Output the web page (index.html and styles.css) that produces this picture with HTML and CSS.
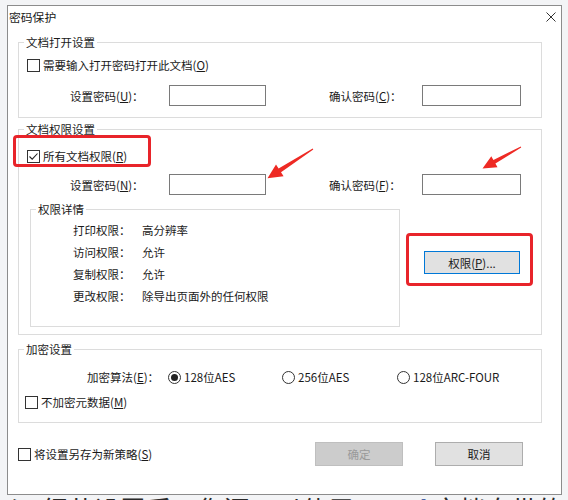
FILE: index.html
```html
<!DOCTYPE html>
<html lang="zh-CN">
<head>
<meta charset="utf-8">
<title>密码保护</title>
<link rel="stylesheet" href="styles.css">
</head>
<body>
<div class="dialog">
  <div class="titlebar">
    <span class="title">密码保护</span>
    <svg class="close" width="10" height="10" viewBox="0 0 10 10"><path d="M0.5 0.5 L9.5 9.5 M9.5 0.5 L0.5 9.5" stroke="#333" stroke-width="1" fill="none"/></svg>
  </div>
  <div class="content">
    <div class="group g1">
      <div class="legend">文档打开设置</div>
      <label class="check-row cr1"><span class="cb"></span><span>需要输入打开密码打开此文档(<u>O</u>)</span></label>
      <div class="pw-row">
        <span class="pw-label l1">设置密码(<u>U</u>)：</span>
        <span class="input i1"></span>
        <span class="pw-label l2">确认密码(<u>C</u>)：</span>
        <span class="input i2"></span>
      </div>
    </div>

    <div class="group g2">
      <div class="legend">文档权限设置</div>
      <label class="check-row cr1"><span class="cb checked"><svg width="11" height="11" viewBox="0 0 11 11"><path d="M1.5 5.5 L4.2 8.2 L9.5 2.5" stroke="#222" stroke-width="1.1" fill="none"/></svg></span><span>所有文档权限(<u>R</u>)</span></label>
      <div class="pw-row r2">
        <span class="pw-label l1">设置密码(<u>N</u>)：</span>
        <span class="input i1"></span>
        <span class="pw-label l2">确认密码(<u>F</u>)：</span>
        <span class="input i2"></span>
      </div>
      <div class="perm-area">
        <div class="group sub">
          <div class="legend">权限详情</div>
          <div class="perm-list">
            <div class="perm"><span class="pk">打印权限：</span><span>高分辨率</span></div>
            <div class="perm"><span class="pk">访问权限：</span><span>允许</span></div>
            <div class="perm"><span class="pk">复制权限：</span><span>允许</span></div>
            <div class="perm"><span class="pk">更改权限：</span><span>除导出页面外的任何权限</span></div>
          </div>
        </div>
        <div class="btn btn-perm">权限(<u>P</u>)...</div>
      </div>
    </div>

    <div class="group g3">
      <div class="legend">加密设置</div>
      <div class="radio-row">
        <span class="alg-label">加密算法(<u>E</u>)：</span>
        <span class="opt o1"><span class="rb on"></span>128位AES</span>
        <span class="opt o2"><span class="rb"></span>256位AES</span>
        <span class="opt o3"><span class="rb"></span>128位ARC-FOUR</span>
      </div>
      <label class="check-row cr3"><span class="cb"></span><span>不加密元数据(<u>M</u>)</span></label>
    </div>

    <div class="footer">
      <label class="check-row cr4"><span class="cb"></span><span>将设置另存为新策略(<u>S</u>)</span></label>
      <div class="btn btn-ok">确定</div>
      <div class="btn btn-cancel">取消</div>
    </div>
  </div>
</div>
<div class="backdoc"><span>≥ 细节设置后，您还可以使用 <b class="blue">Word</b> 文档自带的保护功能</span></div>

<div class="mark m1"></div>
<div class="mark m2"></div>
<svg class="arrows" width="568" height="500" viewBox="0 0 568 500">
  <polygon fill="#ee2a24" points="313.3,149.4 281,172.3 283.6,176.2 267.5,178.3 276,164.6 278.6,168.6 312.7,148.6"/>
  <polygon fill="#ee2a24" points="521.2,147.4 495.4,163.5 497.5,167.2 482.5,168.4 491.3,156.2 493.4,159.9 520.8,146.6"/>
</svg>
</body>
</html>
```
FILE: styles.css
```css
* { box-sizing: border-box; }
html, body { margin: 0; padding: 0; }
body {
  width: 568px;
  height: 500px;
  overflow: hidden;
  background: #f3f4f6;
  font-family: "Noto Sans CJK SC", "Noto Sans", sans-serif;
  font-size: 11.5px;
  color: #1a1a1a;
  position: relative;
}
u { text-decoration: underline; text-underline-offset: 1px; }

.dialog {
  margin: 5px 0 0 7px;
  width: 555px;
  height: 490px;
  border: 1px solid #8c8c8c;
  background: #fff;
}
.titlebar {
  height: 22px;
  display: flex;
  align-items: center;
  padding: 0 5px 0 1px;
}
.title { flex: 1; line-height: 16px; font-size: 11.8px; }
.close { display: block; }

.content { padding: 0 19px 0 10px; }

.group {
  border: 1px solid #dcdcdc;
}
.legend {
  width: fit-content;
  margin: -9px 0 0 5px;
  padding: 0 2px;
  line-height: 16px;
  height: 16px;
  background: #fff;
}
.g1 { margin-top: 14px; padding-bottom: 11px; }
.g2 { margin-top: 11px; padding-bottom: 7px; }
.g3 { margin-top: 14px; padding-bottom: 12px; }

.check-row {
  display: flex;
  align-items: center;
  height: 16px;
  line-height: 16px;
}
.cr1 { margin-top: 7px; padding-left: 8px; }
.g2 .cr1 { margin-top: 11px; }
.cr3 { margin-top: 9px; padding-left: 6px; }
.cb {
  width: 13px;
  height: 13px;
  border: 1px solid #333;
  background: #fff;
  margin-right: 3px;
  display: flex;
  align-items: center;
  justify-content: center;
  flex: none;
}
.cb svg { display: block; }

.pw-row {
  display: flex;
  align-items: center;
  height: 21px;
  margin-top: 12px;
  padding-left: 51px;
}
.pw-row.r2 { margin-top: 10px; }
.pw-label { line-height: 16px; }
.l1 { width: 99px; }
.l2 { width: 93px; margin-left: 63px; }
.input {
  height: 21px;
  border: 1px solid #7a7a7a;
  background: #fff;
}
.i1 { width: 97px; }
.i2 { width: 99px; }

.perm-area {
  display: flex;
  align-items: flex-start;
  margin-top: 14px;
  padding-left: 11px;
}
.sub { width: 370px; padding-bottom: 19px; }
.perm-list { margin-top: 2px; padding-left: 42px; }
.perm { display: flex; line-height: 22px; height: 22px; }
.pk { width: 69px; }

.btn {
  height: 23px;
  display: flex;
  align-items: center;
  justify-content: center;
  background: #e1e1e1;
  border: 1px solid #adadad;
  line-height: 16px;
}
.btn-perm {
  width: 96px;
  margin: 42px 0 0 24px;
  border-color: #0078d7;
}

.radio-row {
  display: flex;
  align-items: center;
  height: 16px;
  line-height: 16px;
  margin-top: 12px;
  padding-left: 68px;
}
.alg-label { width: 81px; }
.opt { display: flex; align-items: center; }
.o1 { width: 114px; }
.o2 { width: 115px; }
.rb {
  width: 13px;
  height: 13px;
  border: 1px solid #333;
  border-radius: 50%;
  margin-right: 3px;
  display: flex;
  align-items: center;
  justify-content: center;
  flex: none;
}
.rb.on::after {
  content: "";
  width: 7px;
  height: 7px;
  border-radius: 50%;
  background: #222;
}

.footer {
  display: flex;
  align-items: center;
  margin-top: 19px;
  height: 24px;
}
.cr4 { flex: 1; }
.btn-ok, .btn-cancel { width: 88px; height: 24px; }
.btn-ok {
  background: #cccccc;
  border-color: #bfbfbf;
  color: #9a9a9a;
}
.btn-cancel { margin-left: 32px; margin-right: 19px; }

.backdoc {
  height: 5px;
  overflow: hidden;
  white-space: nowrap;
  padding-left: 10px;
}
.backdoc span {
  display: block;
  font-size: 26px;
  line-height: 26px;
  margin-top: 1px;
  color: #2a2a2a;
}
.blue { color: #1c3f94; font-weight: bold; }

.mark {
  position: absolute;
  border: 3px solid #e8242a;
  border-radius: 4px;
}
.m1 { left: 13px; top: 135px; width: 138px; height: 32px; }
.m2 { left: 406px; top: 233px; width: 127px; height: 53px; }
.arrows { position: absolute; left: 0; top: 0; pointer-events: none; }
```
